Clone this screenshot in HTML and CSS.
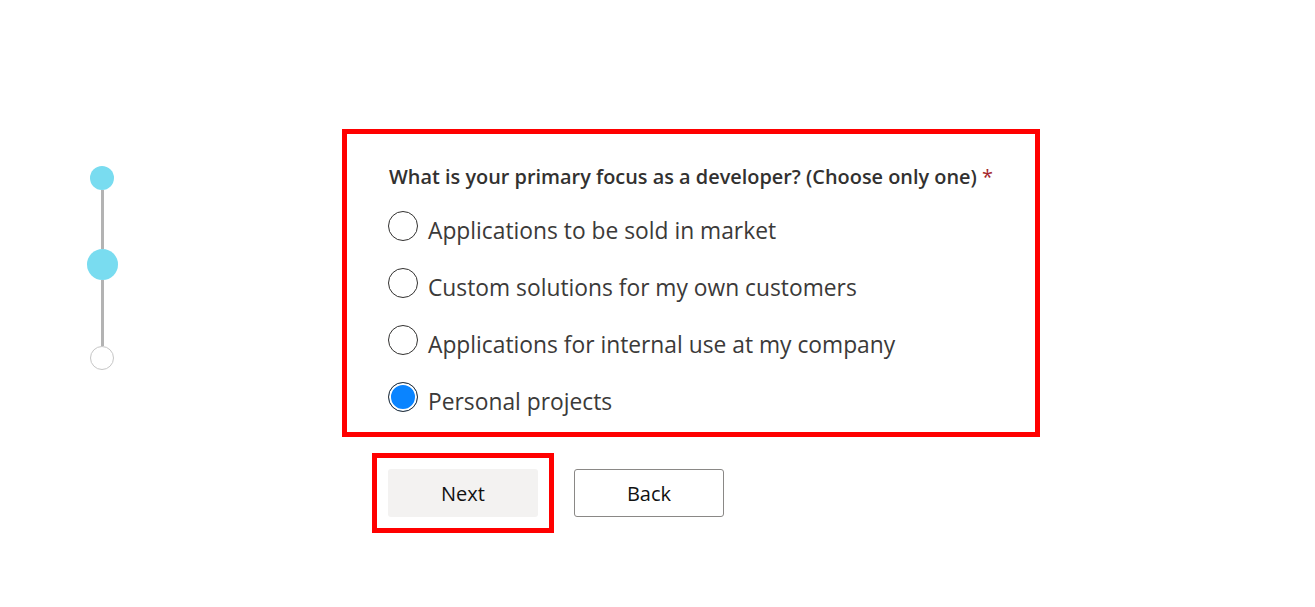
FILE: index.html
```html
<!DOCTYPE html>
<html lang="en">
<head>
<meta charset="utf-8">
<title>Developer focus</title>
<link rel="stylesheet" href="styles.css">
</head>
<body>
<div class="page">
  <div class="stepper">
    <span class="dot dot-done"></span>
    <span class="line line-a"></span>
    <span class="dot dot-current"></span>
    <span class="line line-b"></span>
    <span class="dot dot-todo"></span>
  </div>
  <div class="content">
    <form class="question-box">
      <div class="question">What is your primary focus as a developer? (Choose only one) <span class="req">*</span></div>
      <label class="option"><input type="radio" name="focus"><span>Applications to be sold in market</span></label>
      <label class="option"><input type="radio" name="focus"><span>Custom solutions for my own customers</span></label>
      <label class="option"><input type="radio" name="focus"><span>Applications for internal use at my company</span></label>
      <label class="option"><input type="radio" name="focus" checked><span>Personal projects</span></label>
    </form>
    <div class="actions">
      <div class="highlight"><button class="btn btn-next" type="button">Next</button></div>
      <button class="btn btn-back" type="button">Back</button>
    </div>
  </div>
</div>
</body>
</html>
```

FILE: styles.css
```css
* { box-sizing: border-box; }
html, body { margin: 0; padding: 0; background: #fff; }
body { font-family: "Open Sans", "Noto Sans", "Liberation Sans", sans-serif; color: #323130; }

.page {
  display: flex;
  align-items: flex-start;
  padding-top: 129px;
}

.stepper {
  display: flex;
  flex-direction: column;
  align-items: center;
  width: 30px;
  margin-left: 87px;
  margin-top: 37px;
}
.dot { display: block; border-radius: 50%; flex: none; }
.dot-done { width: 24px; height: 24px; background: #79dcf0; }
.dot-current { width: 31px; height: 31px; background: #79dcf0; }
.dot-todo { width: 24px; height: 24px; background: #fff; border: 1px solid #c6c6c6; }
.line { display: block; width: 3px; background: #b3b3b3; flex: none; }
.line-a { height: 59px; }
.line-b { height: 66px; }

.content { margin-left: 225px; }

.question-box {
  width: 698px;
  height: 308px;
  border: 5px solid #ff0000;
  padding: 30px 30px 0 42px;
  margin: 0;
}
.question {
  font-size: 19.9px;
  font-weight: 600;
  line-height: 26px;
  color: #323130;
  margin-bottom: 7px;
  white-space: nowrap;
}
.req { color: #a4262c; font-weight: 400; }

.option {
  display: flex;
  align-items: center;
  gap: 10px;
  height: 57px;
  margin-left: -1px;
  font-size: 22.8px;
  color: #3b3a39;
  cursor: pointer;
}
.option span { position: relative; top: 5px; }
.option input {
  appearance: none;
  -webkit-appearance: none;
  margin: 0;
  width: 30px;
  height: 30px;
  border: 1px solid #323130;
  border-radius: 50%;
  background: #fff;
  flex: none;
}
.option input:checked {
  background: #0a84ff;
  box-shadow: inset 0 0 0 2px #fff;
}

.actions {
  display: flex;
  align-items: center;
  gap: 20px;
  margin-top: 16px;
  margin-left: 30px;
}
.highlight {
  border: 5px solid #ff0000;
  padding: 11px;
}
.btn {
  width: 150px;
  height: 48px;
  font-family: "Open Sans", "Noto Sans", "Liberation Sans", sans-serif;
  font-size: 20px;
  color: #111111;
  border-radius: 3px;
  cursor: pointer;
  padding: 0;
}
.btn-next { background: #f3f2f1; border: none; display: block; }
.btn-back { background: #fff; border: 1px solid #8a8886; }
```
